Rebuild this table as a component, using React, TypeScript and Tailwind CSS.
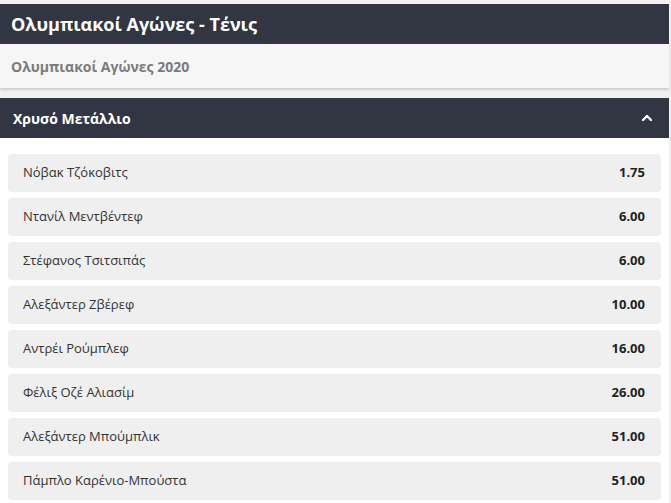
import { ChevronUp } from 'lucide-react';

const odds = [
  { name: 'Νόβακ Τζόκοβιτς', price: '1.75' },
  { name: 'Ντανίλ Μεντβέντεφ', price: '6.00' },
  { name: 'Στέφανος Τσιτσιπάς', price: '6.00' },
  { name: 'Αλεξάντερ Ζβέρεφ', price: '10.00' },
  { name: 'Αντρέι Ρούμπλεφ', price: '16.00' },
  { name: 'Φέλιξ Οζέ Αλιασίμ', price: '26.00' },
  { name: 'Αλεξάντερ Μπούμπλικ', price: '51.00' },
  { name: 'Πάμπλο Καρένιο-Μπούστα', price: '51.00' },
];

function OddsRow({ name, price }: { name: string; price: string }) {
  return (
    <div className="flex h-[38px] items-center justify-between rounded bg-[#efefef] pl-[15px] pr-[16px] text-[13px] text-[#333]">
      <span>{name}</span>
      <span className="font-bold text-[#222]">{price}</span>
    </div>
  );
}

export default function App() {
  return (
    <div
      className="min-h-[503px] w-[671px] bg-[#f0f0f0] pt-1"
      style={{ fontFamily: '"Open Sans", sans-serif' }}
    >
      <div className="w-[669px]">
        <div className="flex h-10 items-center bg-[#323643] px-[11px] text-[18px] font-bold text-white">
          Ολυμπιακοί Αγώνες - Τένις
        </div>
        <div className="flex h-11 items-center bg-[#f6f6f6] px-[11px] text-[14px] font-bold text-[#7b7b7b] shadow-[0_2px_2px_rgba(0,0,0,0.15)]">
          Ολυμπιακοί Αγώνες 2020
        </div>
        <div className="mt-[10px] flex h-10 items-center justify-between bg-[#323643] pl-[13px] pr-[14px] text-[14px] font-bold text-white">
          <span>Χρυσό Μετάλλιο</span>
          <ChevronUp className="size-4" strokeWidth={3.5} />
        </div>
        <div className="flex flex-col gap-[6px] bg-white px-2 pt-[16px] pb-3">
          {odds.map((o) => (
            <OddsRow key={o.name} {...o} />
          ))}
        </div>
      </div>
    </div>
  );
}
